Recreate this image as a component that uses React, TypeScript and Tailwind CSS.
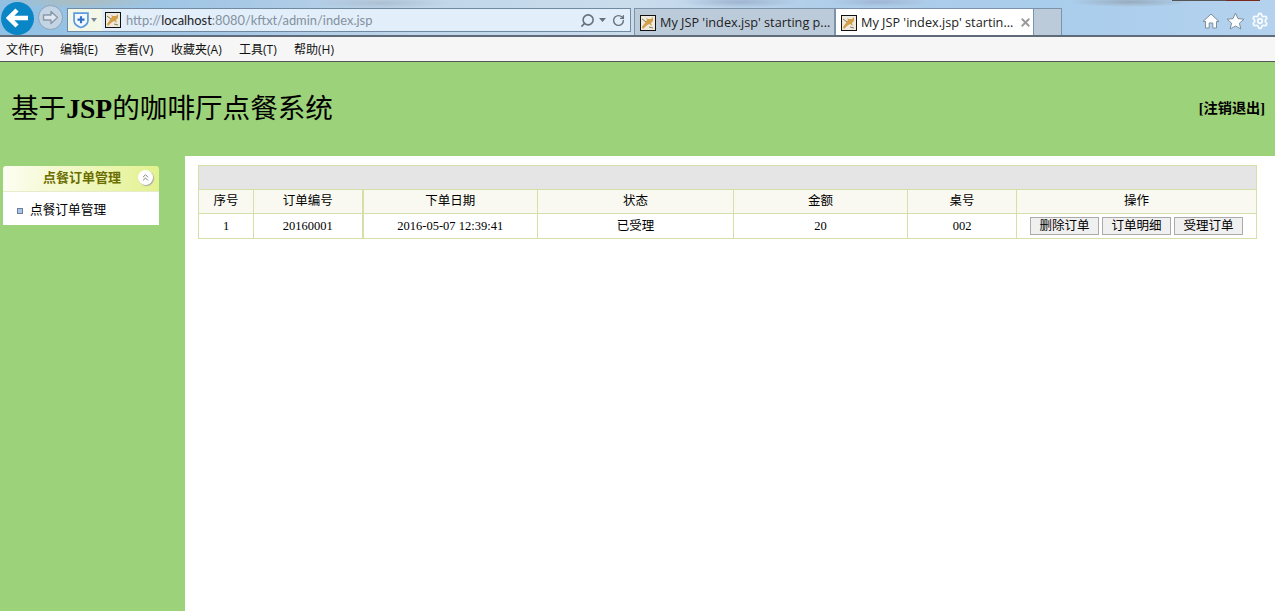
import { Settings, Search, RotateCw, X, ChevronsUp } from 'lucide-react';

const menus = ['文件(F)', '编辑(E)', '查看(V)', '收藏夹(A)', '工具(T)', '帮助(H)'];
const menuWidths = ['w-[54px]', 'w-[55px]', 'w-[56px]', 'w-[68px]', 'w-[55px]', 'w-[60px]'];

function TomcatIcon() {
  return (
    <svg width="16" height="16" viewBox="0 0 16 16" className="shrink-0">
      <rect x="0.5" y="0.5" width="15" height="15" fill="#eeeae0" stroke="#111" />
      <path d="M2 12 L5 8 L7 5 L6 3 L8 4 L11 4 L13 2 L13 6 L11 8 L12 11 L9 9 L6 11 L3 14 Z" fill="#d3a04a" />
      <path d="M2 4 L6 7 M9 12 L13 13" stroke="#8a7a55" strokeWidth="1" />
    </svg>
  );
}

function BrowserTab({ active, title }: { active?: boolean; title: string }) {
  return (
    <div
      className={
        active
          ? 'flex h-[27px] w-[199px] items-center overflow-hidden bg-white pl-[5px] pt-[1px] border-x border-t border-[#7d93ab]'
          : 'flex h-[27px] w-[201px] items-center overflow-hidden bg-[#bccbda] pl-[5px] pt-[1px] border-x border-t border-[#7d93ab]'
      }
    >
      <TomcatIcon />
      <span className="ml-[4px] whitespace-nowrap text-[12.7px] leading-none text-[#222]">{title}</span>
      {active && <X size={13} strokeWidth={3.5} className="ml-[6px] shrink-0 text-[#9a9a9a]" />}
    </div>
  );
}

function BrowserChrome() {
  return (
    <div className="relative font-['Open_Sans','Noto_Sans_CJK_SC',sans-serif]">
      <div className="absolute right-[15px] top-0 flex h-[1px] w-[88px] bg-[#555]">
        <div className="ml-[54px] h-full w-[34px] bg-[#7a2a1c]" />
      </div>
      <div className="flex h-[37px] items-end border-b-2 border-[#5f6b78] bg-[radial-gradient(ellipse_60px_6px_at_740px_2px,#9fb4d0,transparent),radial-gradient(ellipse_50px_5px_at_880px_2px,#a0b6d4,transparent),radial-gradient(ellipse_60px_5px_at_1130px_2px,#98abbd,transparent),radial-gradient(ellipse_80px_7px_at_80px_2px,#adbcbc,transparent),radial-gradient(ellipse_70px_6px_at_380px_3px,#adc0d2,transparent),linear-gradient(90deg,#8fc0e4_0%,#a9c9e6_20%,#c0d6ea_32%,#c9dcec_50%,#aecde9_66%,#a9cdec_82%,#b4d2ee_100%)]">
        <div className="mb-[-1px] ml-[1px] flex h-[33px] w-[33px] shrink-0 items-center justify-center self-center rounded-full bg-[#0a86c6]">
          <svg width="24" height="20" viewBox="0 0 24 20">
            <path d="M11 2 L3 10 L11 18 M3 10 H22" fill="none" stroke="#fff" strokeWidth="4.5" strokeLinejoin="miter" />
          </svg>
        </div>
        <div className="mb-[5px] ml-[4px] flex h-[25px] w-[25px] shrink-0 items-center justify-center rounded-full border border-[#8ea3b8] bg-[#c3d4e4]">
          <svg width="17" height="15" viewBox="0 0 17 15">
            <path d="M9 1.5 L15.5 7.5 L9 13.5 V10 H1.5 V5 H9 Z" fill="#dfe8f0" stroke="#8a98a6" strokeWidth="1.4" strokeLinejoin="round" />
          </svg>
        </div>
        <div className="mb-[3px] ml-[4px] flex h-[24px] w-[564px] shrink-0 items-center border border-[#7289a2] bg-[#e2eefa]">
          <div className="flex h-full w-[34px] items-center bg-[#f3f7e8] pl-[5px]">
            <svg width="16" height="18" viewBox="0 0 15 16">
              <path d="M1 1.5 H14 V9 C14 12 10 14.5 7.5 15 C5 14.5 1 12 1 9 Z" fill="#f4f9ff" stroke="#5c9be0" strokeWidth="1.6" />
              <path d="M7.5 4.5 V11 M4.2 7.7 H10.8" stroke="#2f74c8" strokeWidth="2" />
            </svg>
            <svg width="6" height="4" viewBox="0 0 6 4" className="ml-[2px]">
              <path d="M0 0 H6 L3 4 Z" fill="#7b8794" />
            </svg>
          </div>
          <div className="ml-[3px]">
            <TomcatIcon />
          </div>
          <div className="ml-[5px] whitespace-nowrap pt-[1px] font-['Lato',sans-serif] text-[12.9px] leading-none text-[#84919e]">
            http://<span className="text-[#222]">localhost</span>:8080/kftxt/admin/index.jsp
          </div>
          <div className="ml-auto flex items-center pr-[5px] text-[#66717c]">
            <Search size={15} strokeWidth={2.5} className="-scale-x-100" />
            <svg width="7" height="4" viewBox="0 0 7 4" className="ml-[4px]">
              <path d="M0 0 H7 L3.5 4 Z" fill="#66717c" />
            </svg>
            <RotateCw size={13} strokeWidth={2.5} className="ml-[6px]" />
          </div>
        </div>
        <div className="ml-[3px] flex shrink-0">
          <BrowserTab title="My JSP 'index.jsp' starting p..." />
          <BrowserTab active title="My JSP 'index.jsp' startin..." />
          <div className="h-[27px] w-[28px] border-y border-r border-b-0 border-[#7d93ab] bg-[#bccbda]" />
        </div>
        <div className="mb-[5px] ml-auto flex items-center pr-[6px]">
          <svg width="18" height="18" viewBox="0 0 18 18">
            <path d="M9 2 L17 9.5 H14.5 V16 H10.8 V11 H7.2 V16 H3.5 V9.5 H1 Z" fill="#fbfdfe" stroke="#7f8e9c" strokeWidth="1" strokeLinejoin="round" />
          </svg>
          <svg width="19" height="18" viewBox="0 0 19 18" className="ml-[6px]">
            <path d="M9.5 1 L12 6.6 L18 7.2 L13.4 11.2 L14.9 17 L9.5 14 L4.1 17 L5.6 11.2 L1 7.2 L7 6.6 Z" fill="#fbfdfe" stroke="#7f8e9c" strokeWidth="1" strokeLinejoin="round" />
          </svg>
          <Settings size={18} strokeWidth={2.4} className="ml-[6px] text-[#f7fafc]" />
        </div>
      </div>
      <div className="flex h-[25px] items-center border-b border-[#555] bg-[#f6f6f6] pl-[6px] pt-[1px] text-[12px] text-[#111]">
        {menus.map((m, i) => (
          <span key={m} className={menuWidths[i] + ' whitespace-nowrap'}>{m}</span>
        ))}
      </div>
    </div>
  );
}

const cols = ['w-[55px]', 'w-[109px]', 'w-[175px]', 'w-[196px]', 'w-[174px]', 'w-[109px]', 'w-[240px]'];
const heads = ['序号', '订单编号', '下单日期', '状态', '金额', '桌号', '操作'];
const row = ['1', '20160001', '2016-05-07 12:39:41', '已受理', '20', '002'];

function OrderTable() {
  return (
    <table className="w-[1059px] table-fixed border-collapse text-center text-[12.5px] text-black">
      <colgroup>
        {cols.map((c, i) => (
          <col key={i} className={c} />
        ))}
      </colgroup>
      <tbody>
        <tr className="h-[24px] bg-[#e5e5e5]">
          <td colSpan={7} className="border border-[#d5e0a8]" />
        </tr>
        <tr className="h-[24px] bg-[#f9f9f1]">
          {heads.map((h, i) => (
            <td key={h} className={i === 1 ? 'border border-r-2 border-[#d5e0a8] p-0' : 'border border-[#d5e0a8] p-0'}>{h}</td>
          ))}
        </tr>
        <tr className="h-[25px]">
          {row.map((v, i) => (
            <td key={i} className={i === 1 ? 'border border-r-2 border-[#d5e0a8] p-0' : 'border border-[#d5e0a8] p-0'}>{v}</td>
          ))}
          <td className="border border-[#d5e0a8] p-0">
            <div className="flex justify-center gap-[3px]">
              {['删除订单', '订单明细', '受理订单'].map((b) => (
                <button key={b} className="h-[18px] w-[69px] border border-[#ababab] bg-[#f0f0f0] text-[12.5px] leading-none text-black">
                  {b}
                </button>
              ))}
            </div>
          </td>
        </tr>
      </tbody>
    </table>
  );
}

export default function App() {
  return (
    <div className="flex h-[611px] w-[1275px] flex-col overflow-hidden bg-[#9cd279]">
      <BrowserChrome />
      <div className="flex h-[94px] items-center justify-between pl-[11px] pr-[10px] font-['Liberation_Serif','Noto_Sans_CJK_SC',serif] text-black">
        <h1 className="text-[27.6px] font-normal">基于<b>JSP</b>的咖啡厅点餐系统</h1>
        <a className="text-[14.2px] font-bold">[注销退出]</a>
      </div>
      <div className="flex flex-1 font-['Liberation_Serif','Noto_Sans_CJK_SC',serif]">
        <aside className="w-[185px] pl-[3px] pt-[10px]">
          <div className="w-[156px]">
            <div className="flex h-[26px] items-center rounded-t-[3px] border-b border-[#e8eccb] bg-[linear-gradient(90deg,#fdfdf2,#e3f28f)] pb-[2px] pl-[40px] pr-[6px]">
              <span className="text-[13px] font-bold text-[#6b6d00]">点餐订单管理</span>
              <span className="ml-auto flex h-[15px] w-[15px] items-center justify-center rounded-full bg-white shadow-[1px_1px_1px_#aaa]">
                <ChevronsUp size={11} className="text-[#777]" />
              </span>
            </div>
            <div className="flex h-[33px] items-center bg-white pl-[14px] pt-[4px] text-[12.7px] text-black">
              <span className="h-[6px] w-[6px] border border-[#6f7f9a] bg-[#a9c4ea]" />
              <span className="ml-[7px]">点餐订单管理</span>
            </div>
          </div>
        </aside>
        <main className="flex-1 bg-white pl-[13px] pt-[9px]">
          <OrderTable />
        </main>
      </div>
    </div>
  );
}
